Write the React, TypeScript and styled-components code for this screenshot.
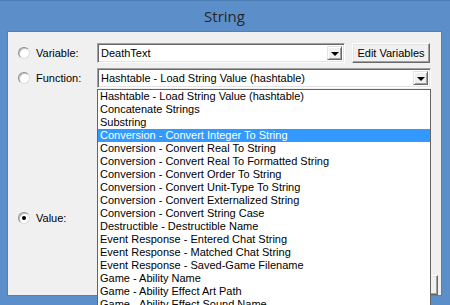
import styled, { createGlobalStyle } from 'styled-components'

const GlobalStyle = createGlobalStyle`
  html, body {
    margin: 0;
    padding: 0;
    overflow: hidden;
    background: #5c8fca;
  }
  body {
    font-family: "Liberation Sans", Arial, sans-serif;
    font-size: 11px;
    color: #000;
  }
`

const functionItems = [
  'Hashtable - Load String Value (hashtable)',
  'Concatenate Strings',
  'Substring',
  'Conversion - Convert Integer To String',
  'Conversion - Convert Real To String',
  'Conversion - Convert Real To Formatted String',
  'Conversion - Convert Order To String',
  'Conversion - Convert Unit-Type To String',
  'Conversion - Convert Externalized String',
  'Conversion - Convert String Case',
  'Destructible - Destructible Name',
  'Event Response - Entered Chat String',
  'Event Response - Matched Chat String',
  'Event Response - Saved-Game Filename',
  'Game - Ability Name',
  'Game - Ability Effect Art Path',
  'Game - Ability Effect Sound Name',
  'Game - Ability Effect Sound Name (Looping)',
]

const Window = styled.div`
  width: 450px;
  height: 305px;
  box-sizing: border-box;
  background: #5c8fca;
  border-top: 1px solid #4d7db5;
  display: flex;
  flex-direction: column;
  padding: 0 8px 9px 7px;
  overflow: hidden;
`

const TitleBar = styled.div`
  height: 29px;
  display: flex;
  align-items: center;
  justify-content: center;
  font-family: "Open Sans", "Noto Sans", sans-serif;
  font-size: 15px;
  color: #262626;
  padding-bottom: 1px;
`

const Client = styled.div`
  flex: 1;
  background: #f0f0f0;
  border: 1px solid #4f80ba;
  display: flex;
  flex-direction: column;
  padding: 11px 3px 0 10px;
  position: relative;
`

const FieldRow = styled.div<{ $top?: number }>`
  display: flex;
  align-items: center;
  gap: 7px;
  height: 20px;
  margin-top: ${(p) => p.$top ?? 0}px;
  margin-right: 7px;
`

const ChoiceLabel = styled.label`
  width: 79px;
  flex: none;
  display: flex;
  align-items: center;
  gap: 6px;
  margin-right: -7px;
`

const Radio = styled.span<{ $checked?: boolean }>`
  width: 12px;
  height: 12px;
  box-sizing: border-box;
  border-radius: 50%;
  background: #fff;
  border: 1px solid;
  border-color: #8d8d8d #dcdcdc #dcdcdc #8d8d8d;
  box-shadow: inset 1px 1px 0 #c4c4c4;
  display: flex;
  align-items: center;
  justify-content: center;
  &::after {
    content: '';
    width: 4px;
    height: 4px;
    border-radius: 50%;
    background: ${(p) => (p.$checked ? '#000' : 'transparent')};
  }
`

const ComboWrap = styled.div<{ $width?: number }>`
  position: relative;
  flex: ${(p) => (p.$width ? 'none' : '1')};
  width: ${(p) => (p.$width ? `${p.$width}px` : 'auto')};
  height: 20px;
`

const ComboField = styled.div`
  height: 100%;
  box-sizing: border-box;
  background: #fff;
  border: 1px solid;
  border-color: #a0a0a0 #fff #fff #a0a0a0;
  box-shadow: inset 1px 1px 0 #696969, inset -1px -1px 0 #e3e3e3;
  display: flex;
  align-items: center;
  padding: 0 2px 0 3px;
`

const ComboText = styled.span`
  flex: 1;
  white-space: nowrap;
  overflow: hidden;
`

const ArrowButton = styled.span`
  width: 15px;
  height: 14px;
  box-sizing: border-box;
  background: #f0f0f0;
  border: 1px solid;
  border-color: #e3e3e3 #696969 #696969 #e3e3e3;
  box-shadow: inset 1px 1px 0 #fff, inset -1px -1px 0 #a0a0a0;
  display: flex;
  align-items: center;
  justify-content: center;
  &::after {
    content: '';
    border-left: 4px solid transparent;
    border-right: 4px solid transparent;
    border-top: 4px solid #000;
    margin-top: 1px;
  }
`

const Button = styled.button<{ $width: number }>`
  width: ${(p) => p.$width}px;
  height: 20px;
  flex: none;
  box-sizing: border-box;
  background: #f0f0f0;
  border: 1px solid;
  border-color: #fff #696969 #696969 #fff;
  box-shadow: inset -1px -1px 0 #a0a0a0, inset 1px 1px 0 #e3e3e3;
  font-family: "Liberation Sans", Arial, sans-serif;
  font-size: 11px;
  color: #000;
  padding: 0;
`

const DropList = styled.ul`
  position: absolute;
  top: 100%;
  left: 0;
  right: 0;
  margin: 1px 0 0;
  padding: 0;
  list-style: none;
  background: #fff;
  border: 1px solid #646464;
  height: 232px;
  overflow: hidden;
  z-index: 2;
`

const DropItem = styled.li<{ $selected?: boolean }>`
  height: 13px;
  line-height: 13px;
  padding-left: 2px;
  white-space: nowrap;
  background: ${(p) => (p.$selected ? '#3399ff' : 'transparent')};
  color: ${(p) => (p.$selected ? '#fff' : '#000')};
`

const ButtonRow = styled.div`
  display: flex;
  justify-content: flex-end;
  gap: 7px;
  margin-top: 47px;
`

export default function App() {
  return (
    <>
      <GlobalStyle />
      <Window>
        <TitleBar>String</TitleBar>
        <Client>
          <FieldRow>
            <ChoiceLabel>
              <Radio />
              Variable:
            </ChoiceLabel>
            <ComboWrap $width={248}>
              <ComboField>
                <ComboText>DeathText</ComboText>
                <ArrowButton />
              </ComboField>
            </ComboWrap>
            <Button $width={78}>Edit Variables</Button>
          </FieldRow>
          <FieldRow $top={5}>
            <ChoiceLabel>
              <Radio />
              Function:
            </ChoiceLabel>
            <ComboWrap>
              <ComboField>
                <ComboText>Hashtable - Load String Value (hashtable)</ComboText>
                <ArrowButton />
              </ComboField>
              <DropList>
                {functionItems.map((item, i) => (
                  <DropItem key={item} $selected={i === 3}>
                    {item}
                  </DropItem>
                ))}
              </DropList>
            </ComboWrap>
          </FieldRow>
          <FieldRow $top={120}>
            <ChoiceLabel>
              <Radio $checked />
              Value:
            </ChoiceLabel>
          </FieldRow>
          <ButtonRow>
            <Button $width={75}>OK</Button>
            <Button $width={75}>Cancel</Button>
          </ButtonRow>
        </Client>
      </Window>
    </>
  )
}
